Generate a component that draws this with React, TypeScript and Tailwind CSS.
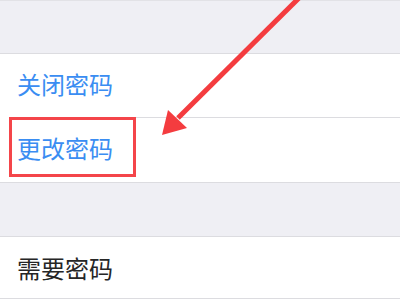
export default function App() {
  return (
    <div className="relative w-[400px] h-[300px] overflow-hidden bg-white font-['Noto_Sans_CJK_SC','Noto_Sans',sans-serif] text-[24px]">
      <div className="h-[53px] bg-[#efeff4] border-t border-[#e2e2e6]" />

      <div className="border-t border-b border-[#dcdce0]">
        <div className="ml-4 h-[64px] border-b border-[#dcdce0] flex items-center pl-px pb-1 text-[#3a8df2]">
          关闭密码
        </div>
        <div className="ml-4 h-[64px] flex items-center pl-px pb-1 text-[#3a8df2]">
          更改密码
        </div>
      </div>

      <div className="h-[53px] bg-[#efeff4]" />

      <div className="border-t border-b border-[#dcdce0]">
        <div className="ml-4 h-[61px] flex items-center pl-px text-[#262626]">
          需要密码
        </div>
      </div>

      {/* annotation: red box + arrow */}
      <div className="absolute left-[9px] top-[117px] w-[127px] h-[60px] border-[3px] border-[#f4454a]" />
      <svg className="absolute inset-0" width="400" height="300" viewBox="0 0 400 300">
        <line x1="300" y1="-3" x2="178" y2="118" stroke="#f43c3f" strokeWidth="5" />
        <polygon points="162,135 168,110 187,128" fill="#f43c3f" />
      </svg>
    </div>
  )
}
